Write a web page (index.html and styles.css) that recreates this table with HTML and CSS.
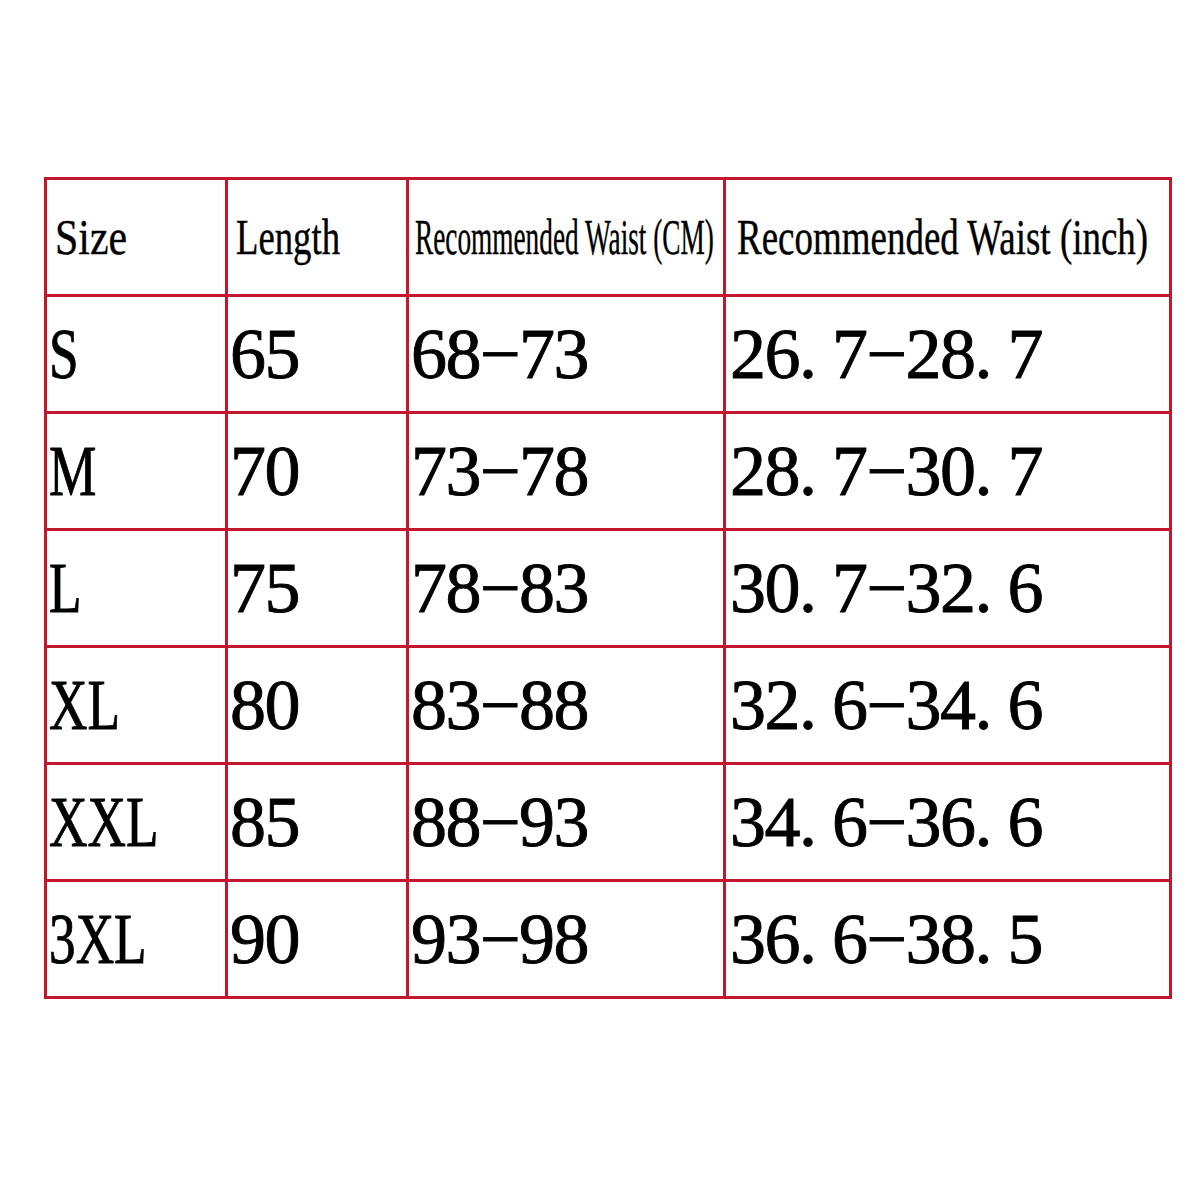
FILE: index.html
```html
<!DOCTYPE html>
<html>
<head>
<meta charset="utf-8">
<link rel="stylesheet" href="styles.css">
</head>
<body>
<div class="chart">
  <div class="cell head c1"><span class="t t-size">Size</span></div>
  <div class="cell head c2"><span class="t t-len">Length</span></div>
  <div class="cell head c3"><span class="t t-cm">Recommended Waist (CM)</span></div>
  <div class="cell head c4"><span class="t t-in">Recommended Waist (inch)</span></div>

  <div class="cell data"><span class="sz">S</span></div>
  <div class="cell data"><span class="num">65</span></div>
  <div class="cell data"><span class="num">68−73</span></div>
  <div class="cell data d4"><span class="num">26. 7−28. 7</span></div>

  <div class="cell data"><span class="sz">M</span></div>
  <div class="cell data"><span class="num">70</span></div>
  <div class="cell data"><span class="num">73−78</span></div>
  <div class="cell data d4"><span class="num">28. 7−30. 7</span></div>

  <div class="cell data"><span class="sz">L</span></div>
  <div class="cell data"><span class="num">75</span></div>
  <div class="cell data"><span class="num">78−83</span></div>
  <div class="cell data d4"><span class="num">30. 7−32. 6</span></div>

  <div class="cell data"><span class="sz">XL</span></div>
  <div class="cell data"><span class="num">80</span></div>
  <div class="cell data"><span class="num">83−88</span></div>
  <div class="cell data d4"><span class="num">32. 6−34. 6</span></div>

  <div class="cell data"><span class="sz">XXL</span></div>
  <div class="cell data"><span class="num">85</span></div>
  <div class="cell data"><span class="num">88−93</span></div>
  <div class="cell data d4"><span class="num">34. 6−36. 6</span></div>

  <div class="cell data"><span class="sz">3XL</span></div>
  <div class="cell data"><span class="num">90</span></div>
  <div class="cell data"><span class="num">93−98</span></div>
  <div class="cell data d4"><span class="num">36. 6−38. 5</span></div>
</div>
</body>
</html>
```

FILE: styles.css
```css
html, body {
  margin: 0;
  padding: 0;
  background: #ffffff;
}

body {
  font-family: "Liberation Serif", "Times New Roman", serif;
  color: #000000;
}

.chart {
  display: grid;
  grid-template-columns: 178px 178px 314px 443px;
  grid-auto-rows: 114px;
  gap: 3px;
  padding: 3px;
  background: #c3172e;
  width: max-content;
  margin: 177px 0 0 44px;
}

.cell {
  background: #ffffff;
  display: flex;
  align-items: center;
  white-space: nowrap;
  overflow: visible;
}

.head {
  font-size: 51px;
  -webkit-text-stroke: 0.4px #000000;
}

.head.c1 { padding-left: 8px; }
.head.c2 { padding-left: 8px; }
.head.c3 { padding-left: 6px; }
.head.c4 { padding-left: 11px; }

.t {
  display: inline-block;
  transform-origin: left center;
}

.t-size { transform: scaleX(0.82); }
.t-len { transform: scaleX(0.72); }
.t-cm { transform: scaleX(0.535); }
.t-in { transform: scaleX(0.725); }

.data {
  font-size: 72px;
  padding-left: 2px;
  -webkit-text-stroke: 0.9px #000000;
}

.data.d4 {
  padding-left: 4px;
}

.num {
  display: inline-block;
  letter-spacing: -1.5px;
}

.sz {
  display: inline-block;
  transform: scaleX(0.74);
  transform-origin: left center;
}
```
